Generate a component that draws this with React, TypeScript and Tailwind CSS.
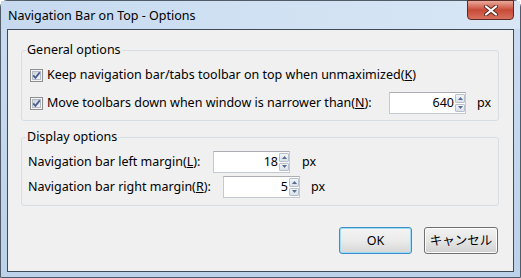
function CheckBox() {
  return (
    <svg width="13" height="13" viewBox="0 0 13 13" className="shrink-0">
      <defs>
        <linearGradient id="cbg" x1="0" y1="0" x2="1" y2="1">
          <stop offset="0" stopColor="#cbcfd5" />
          <stop offset="1" stopColor="#f6f6f6" />
        </linearGradient>
      </defs>
      <rect x="0.5" y="0.5" width="12" height="12" fill="#f4f4f4" stroke="#8e8f8f" />
      <rect x="2.5" y="2.5" width="8" height="8" fill="url(#cbg)" stroke="#b4bbc4" />
      <path d="M3.2 6.4 L5.4 8.8 L9.8 3.4" fill="none" stroke="#4a5f97" strokeWidth="1.8" />
    </svg>
  );
}

function Spinner({ value, width }: { value: string; width: string }) {
  return (
    <div className={`flex h-[22px] ${width} border border-[#c3cad4] border-t-[#abadb3] bg-white`}>
      <div className="flex-1 pr-[1px] text-right leading-[20px]">{value}</div>
      <div className="flex w-[10px] flex-col gap-[1px] py-[1px]">
        <div className="flex flex-1 items-center justify-center rounded-[1px] border border-[#b8c0cc] bg-gradient-to-b from-[#f3f5f8] to-[#d9e0ea]">
          <svg width="5" height="3" viewBox="0 0 5 3"><path d="M0 3 L2.5 0 L5 3 Z" fill="#56698f" /></svg>
        </div>
        <div className="flex flex-1 items-center justify-center rounded-[1px] border border-[#b8c0cc] bg-gradient-to-b from-[#f3f5f8] to-[#d9e0ea]">
          <svg width="5" height="3" viewBox="0 0 5 3"><path d="M0 0 L5 0 L2.5 3 Z" fill="#56698f" /></svg>
        </div>
      </div>
    </div>
  );
}

export default function App() {
  return (
    <div className="h-[278px] w-[521px] bg-white text-[12.5px] leading-[16px] text-black" style={{ fontFamily: '"Noto Sans", "Noto Sans CJK JP", sans-serif' }}>
      <div className="flex h-full flex-col rounded-t-[7px] border border-[#515c69] bg-gradient-to-b from-[#cadcf1] to-[#bcd2ea]">
        {/* title bar */}
        <div className="flex h-[28px] items-start bg-gradient-to-r from-[#c6d9ef] via-[#d0e1f3] to-[#d8e6f5]">
          <span className="pl-[7px] pt-[7px]">Navigation Bar on Top - Options</span>
          <button className="-mt-px ml-auto mr-[6px] flex h-[20px] w-[47px] items-center justify-center rounded-b-[4px] border border-[#5b2a23] bg-gradient-to-b from-[#e9a99b] via-[#c74a36] to-[#d9705f]">
            <svg width="14" height="11" viewBox="0 0 14 11">
              <path d="M2 1.5 L12 9.5 M12 1.5 L2 9.5" stroke="#5a2a24" strokeWidth="4" strokeLinecap="round" />
              <path d="M2 1.5 L12 9.5 M12 1.5 L2 9.5" stroke="#ffffff" strokeWidth="2.2" strokeLinecap="round" />
            </svg>
          </button>
        </div>

        {/* client area */}
        <div className="mx-[6px] mb-[5px] flex flex-1 flex-col border border-[#3f4a57] bg-[#f0f0f0]">
          <fieldset className="ml-[13px] mr-[14px] mt-[12px] rounded-[3px] border border-[#d5dfe5] pb-[6px]">
            <legend className="ml-[4px] px-[1px]">General options</legend>
            <div className="flex flex-col gap-[6px] pl-[8px] pt-[6px]">
              <div className="flex h-[22px] items-center gap-[4px]">
                <CheckBox />
                <span className="whitespace-nowrap">Keep navigation bar/tabs toolbar on top when unmaximized(<u>K</u>)</span>
              </div>
              <div className="flex h-[22px] items-center">
                <div className="flex w-[359px] items-center gap-[4px]">
                  <CheckBox />
                  <span className="whitespace-nowrap">Move toolbars down when window is narrower than(<u>N</u>):</span>
                </div>
                <Spinner value="640" width="w-[77px]" />
                <span className="ml-[11px]">px</span>
              </div>
            </div>
          </fieldset>

          <fieldset className="ml-[13px] mr-[14px] mt-[8px] rounded-[3px] border border-[#d5dfe5] pb-[7px]">
            <legend className="ml-[4px] px-[1px]">Display options</legend>
            <div className="flex flex-col gap-[3px] pl-[6px] pt-[6px]">
              <div className="flex h-[22px] items-center">
                <span className="w-[185px] whitespace-nowrap">Navigation bar left margin(<u>L</u>):</span>
                <Spinner value="18" width="w-[77px]" />
                <span className="ml-[12px]">px</span>
              </div>
              <div className="flex h-[22px] items-center">
                <span className="w-[195px] whitespace-nowrap">Navigation bar right margin(<u>R</u>):</span>
                <Spinner value="5" width="w-[77px]" />
                <span className="ml-[11px]">px</span>
              </div>
            </div>
          </fieldset>

          <div className="mr-[15px] mt-[21px] flex justify-end gap-[12px]">
            <button className="h-[27px] w-[73px] rounded-[3px] border border-[#3c8ec8] bg-gradient-to-b from-[#f4f4f4] via-[#ebebeb] to-[#d6d6d6] shadow-[inset_0_0_0_1px_#9fdcf5]">OK</button>
            <button className="h-[27px] w-[74px] rounded-[3px] border border-[#707070] bg-gradient-to-b from-[#f2f2f2] via-[#e6e6e6] to-[#d0d0d0] shadow-[inset_0_0_0_1px_#fcfcfc]">キャンセル</button>
          </div>
        </div>
      </div>
    </div>
  );
}
